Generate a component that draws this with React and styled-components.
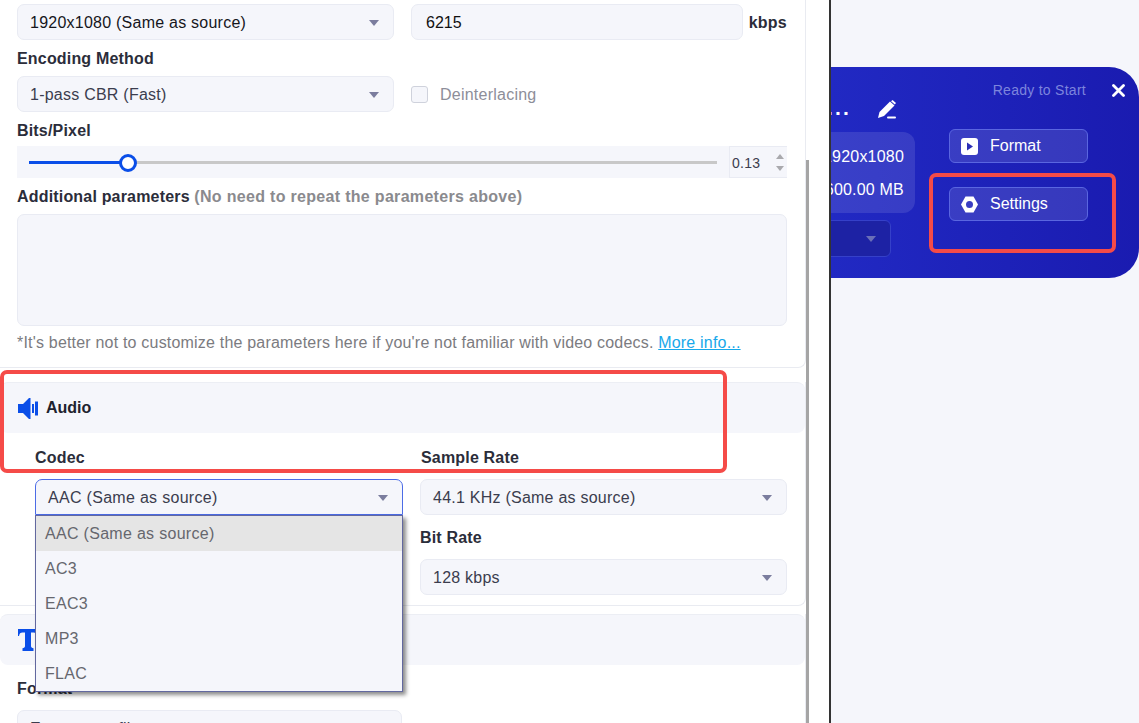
import React from "react";
import styled, { createGlobalStyle } from "styled-components";

const Global = createGlobalStyle`
  html, body { margin: 0; padding: 0; height: 100%; overflow: hidden; background: #fff; }
  body { font-family: "Liberation Sans", Arial, sans-serif; font-size: 16px; letter-spacing: 0.24px; }
  * { box-sizing: border-box; }
`;

const Page = styled.div`
  position: relative;
  display: flex;
  width: 1139px;
  height: 723px;
  overflow: hidden;
`;

const Settings = styled.main`
  width: 806px;
  flex: none;
  height: 723px;
  overflow: hidden;
`;

const Section = styled.section`
  padding: ${(p) => p.$top || 0}px 18px ${(p) => p.$bottom || 0}px 17px;
  border-right: 1px solid #e9ebf1;
  border-bottom: 1px solid #e9ebf1;
  border-bottom-right-radius: 8px;
  margin-bottom: ${(p) => p.$after || 0}px;
`;

const FlushSection = styled(Section)`
  padding: 0 0 ${(p) => p.$bottom || 0}px;
`;

const Row = styled.div`
  display: flex;
  align-items: center;
`;

const Label = styled.div`
  font-weight: 700;
  color: #2b2d3a;
  line-height: 18px;
  letter-spacing: 0.18px;
  margin: ${(p) => p.$top ?? 10}px 0 ${(p) => p.$under ?? 8}px;
  padding-left: ${(p) => p.$inset || 0}px;
  white-space: nowrap;
`;

const Hint = styled.span`
  color: #8a8a8e;
  letter-spacing: 0.31px;
`;

const SelectBox = styled.div`
  position: relative;
  width: ${(p) => p.$width || 377}px;
  height: 36px;
  flex: none;
  display: flex;
  align-items: center;
  padding: 2px 0 0 12px;
  background: #f5f6fb;
  border: 1px solid ${(p) => (p.$open ? "#4c6ce6" : "#e9ebf3")};
  border-radius: ${(p) => (p.$open ? "7px 7px 0 0" : "7px")};
  color: ${(p) => p.$color || "#3b3d4e"};
  letter-spacing: ${(p) => (p.$open ? "0.3px" : "inherit")};
  white-space: nowrap;
`;

const Caret = styled.i`
  position: absolute;
  right: 14px;
  top: 15px;
  width: 0;
  height: 0;
  border-left: 5px solid transparent;
  border-right: 5px solid transparent;
  border-top: 6px solid ${(p) => p.$color || "#7b7d9e"};
`;

const NumberField = styled.div`
  width: 332px;
  height: 36px;
  margin-left: 17px;
  padding: 2px 0 0 14px;
  display: flex;
  align-items: center;
  background: #f5f6fb;
  border: 1px solid #e9ebf3;
  border-radius: 7px;
  color: #111;
  letter-spacing: 0;
`;

const Unit = styled.span`
  margin-left: 6px;
  padding-top: 2px;
  font-weight: 700;
  color: #2b2d3a;
`;

const CheckRow = styled.label`
  display: flex;
  align-items: center;
  gap: 12px;
  margin-left: 17px;
  color: #8d8e99;
`;

const CheckText = styled.span`
  padding-top: 2px;
`;

const Checkbox = styled.span`
  width: 17px;
  height: 17px;
  background: #f5f6fb;
  border: 1px solid #cfd2dc;
  border-radius: 3px;
`;

const SliderRow = styled.div`
  display: flex;
  height: 32px;
`;

const SliderWell = styled.div`
  flex: 1;
  display: flex;
  align-items: center;
  padding: 0 12px;
  background: #f5f6fb;
`;

const Track = styled.div`
  position: relative;
  flex: 1;
  height: 3px;
  background: #c8c8c8;
`;

const TrackFill = styled.div`
  height: 3px;
  background: #0a4ee8;
`;

const Thumb = styled.span`
  position: absolute;
  top: -7px;
  margin-left: -9px;
  width: 18px;
  height: 18px;
  background: #fff;
  border: 3px solid #0a4ee8;
  border-radius: 50%;
`;

const Spin = styled.div`
  width: 58px;
  display: flex;
  align-items: center;
  justify-content: space-between;
  padding: 1px 3px 0 2px;
  font-size: 14px;
  letter-spacing: 0.3px;
  color: #3b3d4e;
  background: #f5f6fb;
  border: 1px solid #e9ebf3;
  border-right: 0;
`;

const SpinArrows = styled.div`
  display: flex;
  flex-direction: column;
  gap: 7px;
`;

const SpinArrow = styled.i`
  width: 0;
  height: 0;
  border-left: 4px solid transparent;
  border-right: 4px solid transparent;
  border-${(p) => (p.$down ? "top" : "bottom")}: 5px solid #a9a9ad;
`;

const TextArea = styled.div`
  height: 112px;
  background: #f5f6fb;
  border: 1px solid #e9ebf3;
  border-radius: 7px;
`;

const Note = styled.p`
  margin: 8px 0 0;
  line-height: 18px;
  letter-spacing: 0.195px;
  color: #7b7b80;
  white-space: nowrap;
`;

const MoreLink = styled.a`
  color: #17a8ea;
  text-decoration: underline;
`;

const SectionHead = styled.header`
  height: 51px;
  display: flex;
  align-items: center;
  gap: 8px;
  padding-left: 18px;
  background: #f5f6fb;
  border-top: 1px solid #eceef4;
  border-radius: 8px;
  font-weight: 700;
  letter-spacing: 0;
  color: #20222e;
`;

const AudioGrid = styled.div`
  display: grid;
  grid-template-columns: 368px 367px;
  column-gap: 17px;
  padding-left: 35px;
`;

const Field = styled.div`
  position: relative;
`;

const Menu = styled.ul`
  position: absolute;
  z-index: 5;
  top: 100%;
  left: 0;
  width: 368px;
  margin: 0;
  padding: 0;
  list-style: none;
  background: #f5f6fb;
  border: 1px solid #62689f;
  box-shadow: 3px 3px 4px rgba(0, 0, 0, 0.45);
`;

const MenuItem = styled.li`
  height: 35px;
  line-height: 34px;
  padding: 1px 0 0 9px;
  letter-spacing: 0.3px;
  color: #66676e;
  background: ${(p) => (p.$active ? "#e5e5e5" : "transparent")};
`;

const FormatBlock = styled.div`
  padding-left: 17px;
`;

const Gutter = styled.div`
  width: 23px;
  flex: none;
  padding-top: 160px;
`;

const ScrollThumb = styled.div`
  width: 3px;
  height: 563px;
  background: #a5a5a5;
`;

const Divider = styled.div`
  width: 2px;
  flex: none;
  background: #333;
`;

const Side = styled.aside`
  flex: 1;
  min-width: 0;
  overflow: hidden;
  padding-top: 67px;
  background: #f5f6fb;
`;

const Card = styled.div`
  height: 211px;
  display: flex;
  justify-content: flex-end;
  gap: 34px;
  padding-top: 14px;
  background: linear-gradient(90deg, #2129c3, #1a1bb0);
  border-radius: 0 30px 30px 0;
`;

const InfoColumn = styled.div`
  width: 140px;
  flex: none;
  display: flex;
  flex-direction: column;
  align-items: flex-end;
`;

const NameRow = styled.div`
  display: flex;
  align-items: center;
  gap: 26px;
  height: 18px;
  margin: 19px 18px 14px 0;
`;

const Dots = styled.span`
  color: #fff;
  font-size: 21px;
  font-weight: 700;
  letter-spacing: 2.2px;
  line-height: 18px;
  padding-bottom: 2px;
`;

const Specs = styled.div`
  width: 140px;
  height: 81px;
  display: flex;
  flex-direction: column;
  justify-content: center;
  align-items: flex-end;
  gap: 15px;
  padding: 2px 11px 0 0;
  line-height: 18px;
  letter-spacing: 0.2px;
  color: #fff;
  background: rgba(255, 255, 255, 0.11);
  border-radius: 12px;
`;

const PresetBox = styled.div`
  position: relative;
  width: 110px;
  height: 37px;
  margin: 7px 24px 0 0;
  background: #1d22a4;
  border: 1px solid #3540c9;
  border-radius: 6px;
`;

const ActionColumn = styled.div`
  width: 190px;
  flex: none;
`;

const StatusRow = styled.div`
  display: flex;
  align-items: center;
  justify-content: flex-end;
  gap: 26px;
  height: 18px;
  padding-right: 14px;
  font-size: 14px;
  letter-spacing: 0.27px;
  color: #7d85dd;
`;

const ActionButton = styled.button`
  display: flex;
  align-items: center;
  gap: 12px;
  width: 139px;
  height: 34px;
  margin-top: ${(p) => p.$top}px;
  padding: 0 0 0 11px;
  font: inherit;
  letter-spacing: 0;
  color: #fff;
  background: rgba(255, 255, 255, 0.12);
  border: 1px solid #5a66e0;
  border-radius: 6px;
`;

const Highlight = styled.div`
  position: absolute;
  left: ${(p) => p.$x}px;
  top: ${(p) => p.$y}px;
  width: ${(p) => p.$w}px;
  height: ${(p) => p.$h}px;
  z-index: 8;
  border: 4px solid #f54b48;
  border-radius: 7px;
  pointer-events: none;
`;

const SpeakerIcon = () => (
  <svg width="20" height="21" viewBox="0 0 20 21">
    <path d="M0 6h5l6-6h1.500v21H11l-6-6H0z" fill="#0a4ee8" />
    <rect x="14" y="6" width="2" height="9" fill="#0a4ee8" />
    <rect x="17" y="3.500" width="3" height="14" fill="#0a4ee8" />
  </svg>
);

const TextIcon = () => (
  <svg width="20" height="22" viewBox="0 0 20 22">
    <path d="M0 0h20v7h-1c-.4-2.400-1.400-3.500-3.500-3.500H13v13.500c0 1.500 1 2 2.500 2.200V22h-11v-2.800c1.500-.2 2.500-.7 2.500-2.200V3.500H4.500C2.400 3.500 1.400 4.600 1 7H0z" fill="#0a4ee8" />
  </svg>
);

const PencilIcon = () => (
  <svg width="20" height="19" viewBox="0 0 20 19">
    <path d="M13 1.500l4.500 4L7 16l-6 2 1.500-6z" fill="#fff" />
    <path d="M14 1.200l1.500-1.200 3.500 3-1.200 1.500z" fill="#fff" />
    <rect x="10" y="16.500" width="9" height="2" rx="1" fill="#fff" />
  </svg>
);

const CloseIcon = () => (
  <svg width="13" height="13" viewBox="0 0 13 13">
    <path d="M1.500 1.500l10 10M11.500 1.500l-10 10" stroke="#fff" strokeWidth="2.800" strokeLinecap="round" />
  </svg>
);

const FormatIcon = () => (
  <svg width="17" height="17" viewBox="0 0 17 17">
    <rect width="17" height="17" rx="3" fill="#fff" />
    <path d="M6 4.500l6 4-6 4z" fill="#2b2fb5" />
  </svg>
);

const GearIcon = () => (
  <svg width="17" height="17" viewBox="0 0 17 17">
    <path fillRule="evenodd" d="M4.500.500h8L17 8.500l-4.500 8h-8L0 8.500zM8.500 5a3.500 3.500 0 100 7 3.500 3.500 0 000-7z" fill="#fff" />
  </svg>
);

export default function App() {
  return (
    <Page>
      <Global />
      <Settings>
        <Section $top={4} $bottom={15} $after={14}>
          <Row>
            <SelectBox $color="#15161c">
              1920x1080 (Same as source)
              <Caret />
            </SelectBox>
            <NumberField>6215</NumberField>
            <Unit>kbps</Unit>
          </Row>
          <Label>Encoding Method</Label>
          <Row>
            <SelectBox>
              1-pass CBR (Fast)
              <Caret />
            </SelectBox>
            <CheckRow>
              <Checkbox />
              <CheckText>Deinterlacing</CheckText>
            </CheckRow>
          </Row>
          <Label $under={6}>Bits/Pixel</Label>
          <SliderRow>
            <SliderWell>
              <Track>
                <TrackFill style={{ width: "14.4%" }} />
                <Thumb style={{ left: "14.4%" }} />
              </Track>
            </SliderWell>
            <Spin>
              0.13
              <SpinArrows>
                <SpinArrow />
                <SpinArrow $down />
              </SpinArrows>
            </Spin>
          </SliderRow>
          <Label>
            Additional parameters <Hint>(No need to repeat the parameters above)</Hint>
          </Label>
          <TextArea />
          <Note>
            *It's better not to customize the parameters here if you're not familiar with video codecs.{" "}
            <MoreLink>More info...</MoreLink>
          </Note>
        </Section>

        <FlushSection $bottom={10} $after={8}>
          <SectionHead>
            <SpeakerIcon />
            Audio
          </SectionHead>
          <AudioGrid>
            <Field>
              <Label $top={16} $under={12}>Codec</Label>
              <Field>
                <SelectBox $width={368} $open>
                  AAC (Same as source)
                  <Caret />
                </SelectBox>
                <Menu>
                  <MenuItem $active>AAC (Same as source)</MenuItem>
                  <MenuItem>AC3</MenuItem>
                  <MenuItem>EAC3</MenuItem>
                  <MenuItem>MP3</MenuItem>
                  <MenuItem>FLAC</MenuItem>
                </Menu>
              </Field>
            </Field>
            <Field>
              <Label $top={16} $under={12} $inset={1}>Sample Rate</Label>
              <SelectBox $width={367}>
                44.1 KHz (Same as source)
                <Caret />
              </SelectBox>
              <Label $top={14} $under={12}>Bit Rate</Label>
              <SelectBox $width={367}>
                128 kbps
                <Caret />
              </SelectBox>
            </Field>
          </AudioGrid>
        </FlushSection>

        <FlushSection>
          <SectionHead>
            <TextIcon />
            Subtitle
          </SectionHead>
          <FormatBlock>
            <Label $top={15} $under={12}>Format</Label>
            <SelectBox $width={385}>
              Export as a file
              <Caret />
            </SelectBox>
          </FormatBlock>
        </FlushSection>
      </Settings>

      <Gutter>
        <ScrollThumb />
      </Gutter>
      <Divider />

      <Side>
        <Card>
          <InfoColumn>
            <NameRow>
              <Dots>...</Dots>
              <PencilIcon />
            </NameRow>
            <Specs>
              <span>1920x1080</span>
              <span>600.00 MB</span>
            </Specs>
            <PresetBox>
              <Caret $color="#6a6fb8" />
            </PresetBox>
          </InfoColumn>
          <ActionColumn>
            <StatusRow>
              Ready to Start
              <CloseIcon />
            </StatusRow>
            <ActionButton $top={30}>
              <FormatIcon />
              Format
            </ActionButton>
            <ActionButton $top={24}>
              <GearIcon />
              Settings
            </ActionButton>
          </ActionColumn>
        </Card>
      </Side>

      <Highlight $x={0} $y={370} $w={727} $h={103} />
      <Highlight $x={929} $y={173} $w={187} $h={80} />
    </Page>
  );
}
